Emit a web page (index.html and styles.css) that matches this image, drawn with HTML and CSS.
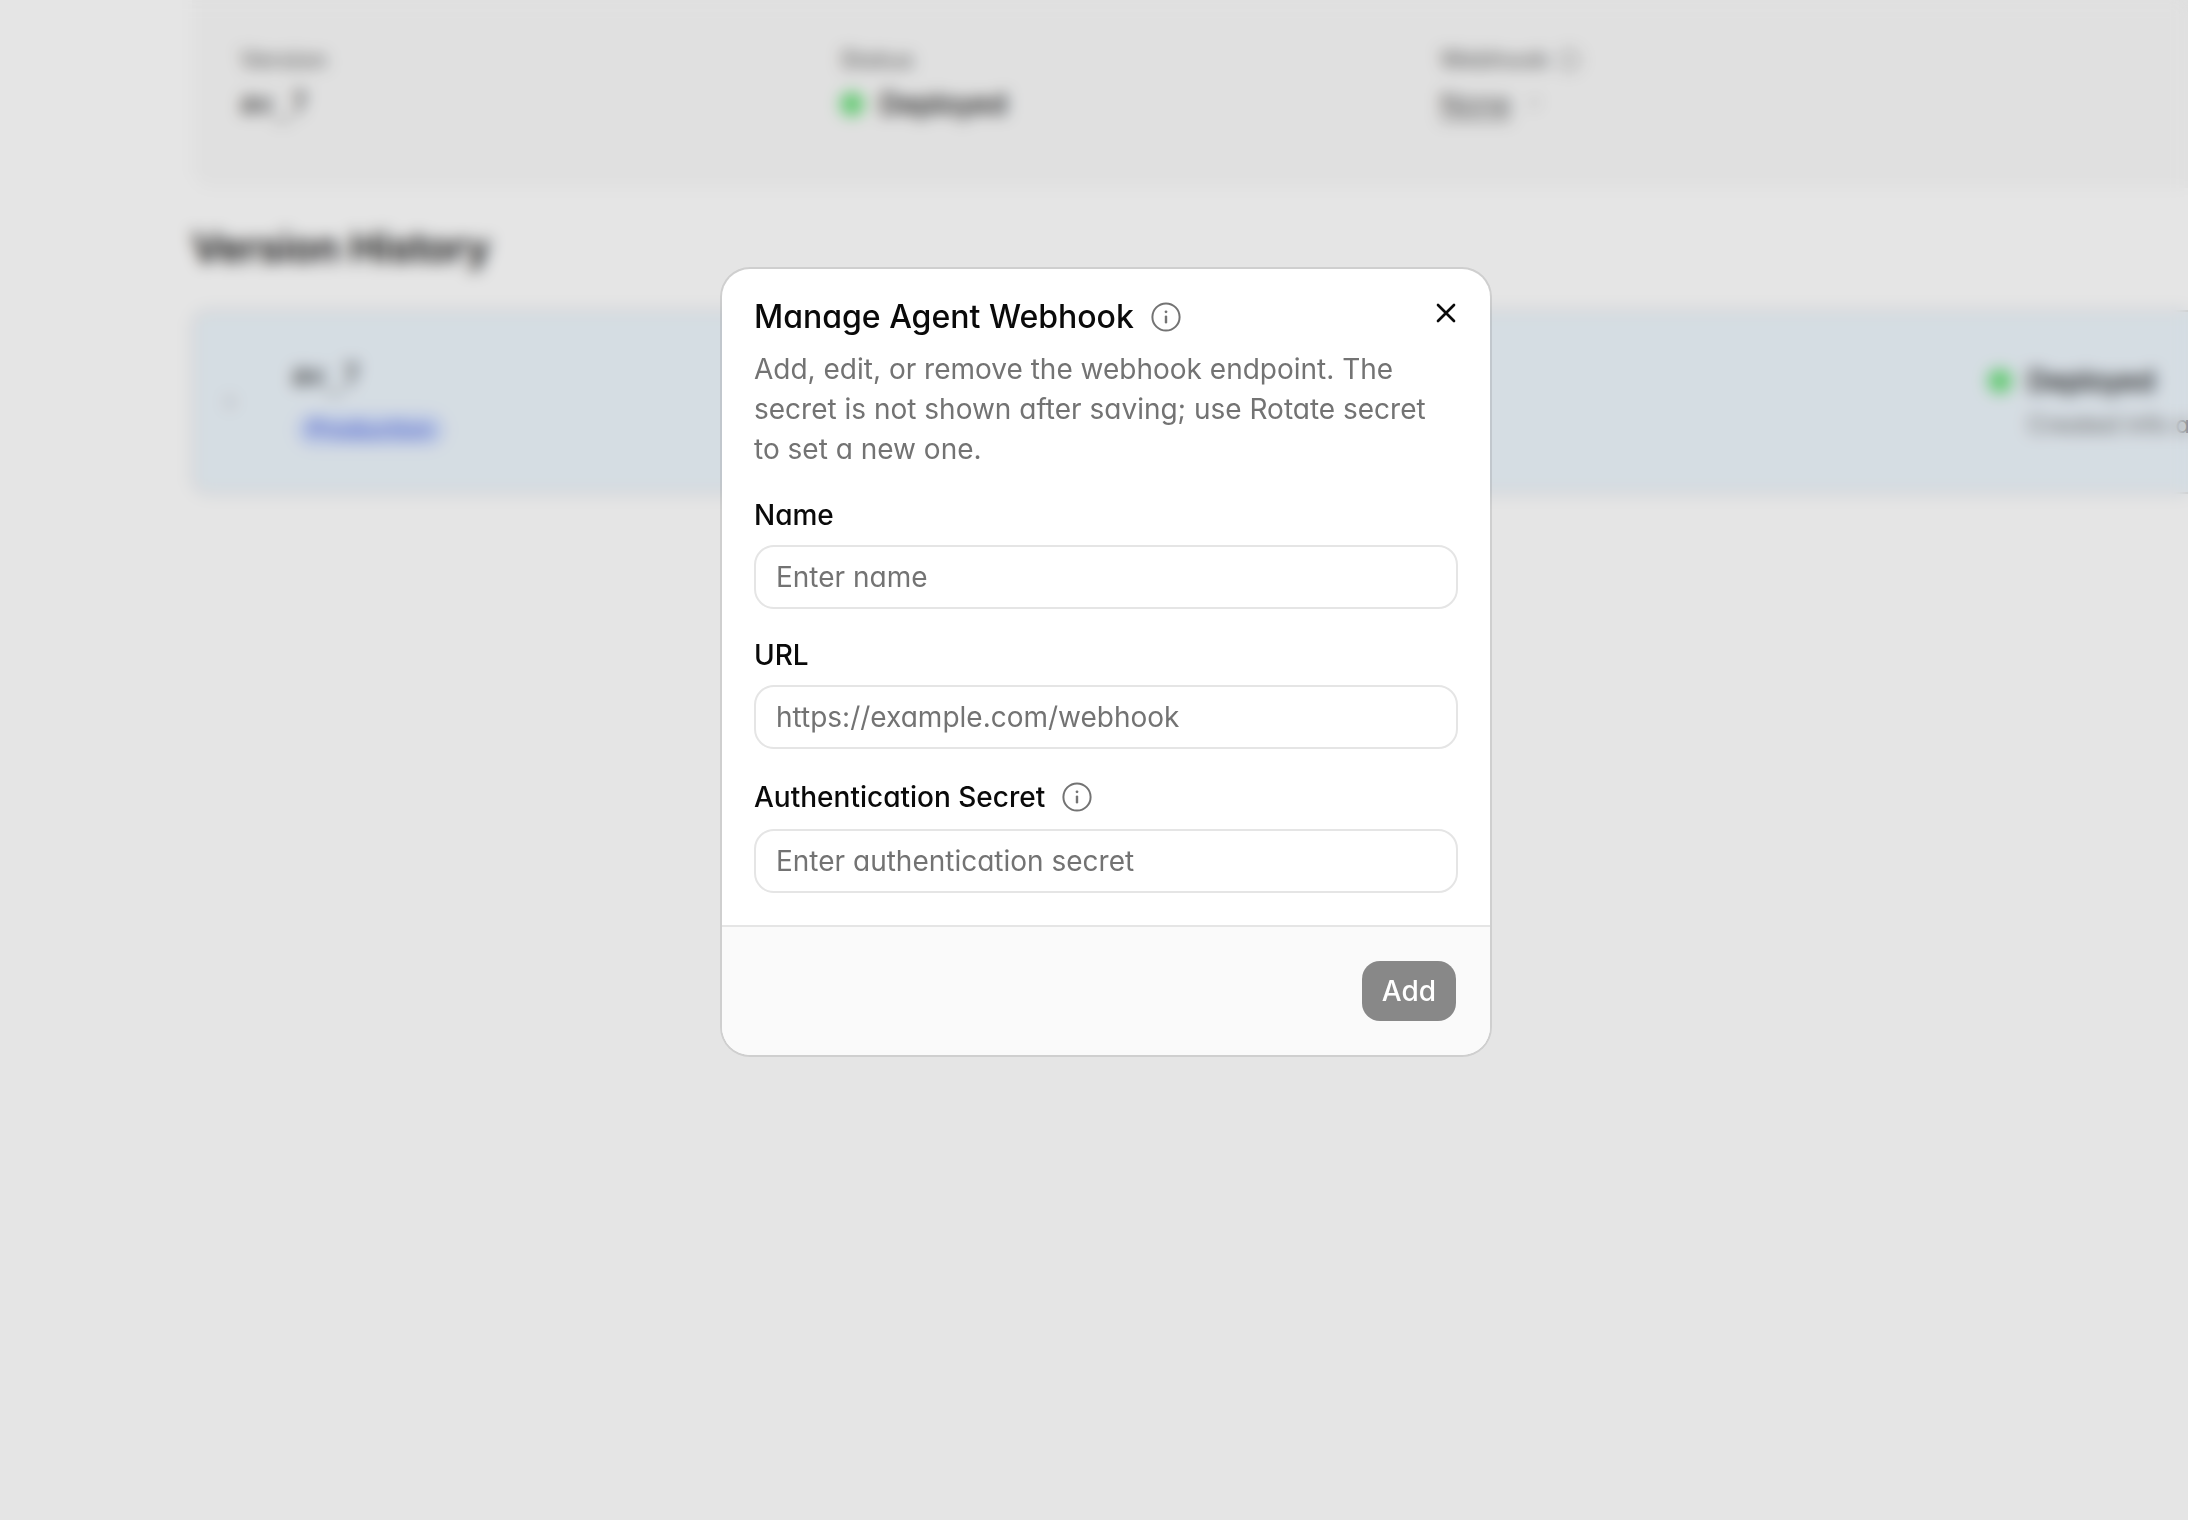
FILE: index.html
```html
<!DOCTYPE html>
<html lang="en">
<head>
  <meta charset="utf-8">
  <meta name="viewport" content="width=device-width, initial-scale=1">
  <title>Manage Agent Webhook</title>
  <link rel="stylesheet" href="styles.css">
</head>
<body>
  <main class="page" inert>
    <section class="summary">
      <div class="fact">
        <span class="fact-label">Version</span>
        <span class="fact-value mono">av_7</span>
      </div>
      <div class="fact">
        <span class="fact-label">Status</span>
        <span class="fact-value status"><span class="dot"></span>Deployed</span>
      </div>
      <div class="fact">
        <span class="fact-label">Webhook
          <svg class="icon-small" viewBox="0 0 24 24" fill="none" stroke="currentColor" stroke-width="1.5" aria-hidden="true"><circle cx="12" cy="12" r="10"/><path d="M12 11v6M12 8v.01"/></svg>
        </span>
        <span class="fact-value link-value"><a class="none-link" href="#webhook">None</a>
          <svg class="icon-edit" viewBox="0 0 24 24" fill="none" stroke="currentColor" stroke-width="2" aria-hidden="true"><path d="M7 17 17 7M11 7h6v6"/></svg>
        </span>
      </div>
    </section>
    <h2 class="history-title">Version History</h2>
    <section class="version-row">
      <svg class="chevron" viewBox="0 0 24 24" fill="none" stroke="currentColor" stroke-width="2" aria-hidden="true"><path d="m9 6 6 6-6 6"/></svg>
      <div class="version-name">
        <span class="mono">av_7</span>
        <span class="badge">Production</span>
      </div>
      <div class="version-state">
        <span class="status"><span class="dot"></span>Deployed</span>
        <span class="created">Created info ago</span>
      </div>
    </section>
  </main>

  <div class="overlay">
    <form class="dialog" role="dialog" aria-modal="true" aria-labelledby="dialog-title">
      <button class="close" type="button" aria-label="Close">
        <svg class="icon" viewBox="0 0 24 24" fill="none" stroke="currentColor" stroke-width="2" stroke-linecap="round" aria-hidden="true"><path d="M18 6 6 18M6 6l12 12"/></svg>
      </button>
      <div class="content">
        <header class="header">
          <div class="title-row">
            <h1 class="title" id="dialog-title">Manage Agent Webhook</h1>
            <svg class="icon info" viewBox="0 0 32 32" fill="none" stroke="currentColor" stroke-width="2" stroke-linecap="round" aria-hidden="true"><circle cx="16" cy="16" r="13.6"/><path stroke-width="2.4" d="M16 15.6v5.6"/><circle cx="16" cy="10.8" r="1.4" fill="currentColor" stroke="none"/></svg>
          </div>
          <p class="description">Add, edit, or remove the webhook endpoint. The secret is not shown after saving; use Rotate secret to set a new one.</p>
        </header>
        <div class="field">
          <label class="label" for="name">Name</label>
          <input class="input" id="name" type="text" placeholder="Enter name">
        </div>
        <div class="field">
          <label class="label" for="url">URL</label>
          <input class="input" id="url" type="url" placeholder="https://example.com/webhook">
        </div>
        <div class="field">
          <div class="label-row">
            <label class="label" for="secret">Authentication Secret</label>
            <svg class="icon info" viewBox="0 0 32 32" fill="none" stroke="currentColor" stroke-width="2" stroke-linecap="round" aria-hidden="true"><circle cx="16" cy="16" r="13.6"/><path stroke-width="2.4" d="M16 15.6v5.6"/><circle cx="16" cy="10.8" r="1.4" fill="currentColor" stroke="none"/></svg>
          </div>
          <input class="input" id="secret" type="password" placeholder="Enter authentication secret">
        </div>
      </div>
      <footer class="footer">
        <button class="add" type="submit" disabled>Add</button>
      </footer>
    </form>
  </div>
</body>
</html>
```
FILE: styles.css
```css
* {
  box-sizing: border-box;
}

body {
  margin: 0;
  min-height: 100vh;
  overflow: hidden;
  background: #fff;
  color: #0a0a0a;
  font-family: Inter, "Liberation Sans", sans-serif;
  font-feature-settings: "cv11";
  font-size: 28px;
  line-height: 40px;
}

h1,
h2,
p {
  margin: 0;
}

/* Page behind the dialog */
.page {
  padding-left: 192px;
}

.summary {
  display: grid;
  grid-template-columns: 600px 600px 1fr;
  padding: 40px 48px 64px;
  border-radius: 0 0 0 20px;
  background: #fafafa;
}

.fact {
  display: flex;
  flex-direction: column;
  gap: 4px;
}

.fact-label {
  display: flex;
  align-items: center;
  gap: 8px;
  color: #737373;
  font-size: 24px;
  font-weight: 500;
}

.fact-value {
  display: flex;
  align-items: center;
}

.link-value {
  gap: 12px;
}

.mono {
  font-family: "DejaVu Sans Mono", monospace;
}

.icon-small {
  width: 24px;
  height: 24px;
}

.icon-edit {
  width: 20px;
  height: 20px;
  color: #a3a3a3;
}

.none-link {
  color: #525252;
  text-underline-offset: 4px;
}

.status {
  display: flex;
  align-items: center;
  gap: 16px;
  font-weight: 500;
}

.dot {
  width: 24px;
  height: 24px;
  border-radius: 50%;
  background: #6be07c;
}

.history-title {
  padding: 38px 0 40px;
  font-size: 40px;
  font-weight: 600;
  line-height: 44px;
}

.version-row {
  display: flex;
  align-items: center;
  height: 184px;
  padding: 0 0 0 24px;
  border: 2px solid #dcdcdc;
  border-right: 0;
  border-radius: 16px 0 0 16px;
  background: #eef6fd;
}

.chevron {
  width: 24px;
  height: 24px;
  color: #a3a3a3;
}

.version-name {
  display: flex;
  flex: 1;
  flex-direction: column;
  align-items: flex-start;
  gap: 18px;
  padding: 0 0 2px 50px;
}

.badge {
  margin-left: 4px;
  padding: 0 12px;
  border-radius: 16px;
  background: #d3e1ff;
  color: #5a70e0;
  font-size: 24px;
  font-weight: 500;
  line-height: 32px;
}

.version-state {
  display: flex;
  flex: 0 0 200px;
  flex-direction: column;
  gap: 4px;
  min-width: 0;
  padding-top: 2px;
  white-space: nowrap;
}

.created {
  padding-left: 40px;
  color: #737373;
  font-size: 24px;
}

/* Dialog */
.overlay {
  position: fixed;
  inset: 0;
  display: flex;
  align-items: flex-start;
  justify-content: center;
  padding: 269px 0 0 24px;
  background: rgba(0, 0, 0, 0.1);
  backdrop-filter: blur(8px);
}

.dialog {
  position: relative;
  width: 100%;
  max-width: 768px;
  border-radius: 28px;
  background: #fff;
  box-shadow: 0 0 0 2px rgba(10, 10, 10, 0.1);
}

.content {
  display: flex;
  flex-direction: column;
  gap: 32px;
  padding: 32px;
}

.header,
.field {
  display: flex;
  flex-direction: column;
  gap: 16px;
}

.title-row,
.label-row {
  display: flex;
  align-items: center;
  gap: 16px;
}

.title {
  font-size: 32px;
  font-weight: 500;
  line-height: 32px;
}

.icon {
  display: block;
  flex: none;
  width: 32px;
  height: 32px;
}

.info {
  color: #737373;
}

.description {
  color: #737373;
}

.label {
  font-weight: 500;
  line-height: 28px;
}

.input {
  width: 100%;
  height: 64px;
  padding: 0 20px;
  border: 2px solid #e5e5e5;
  border-radius: 20px;
  outline: 0;
  background: transparent;
  color: inherit;
  font: inherit;
  font-feature-settings: inherit;
}

.input::placeholder {
  color: #737373;
  opacity: 1;
}

.close {
  position: absolute;
  top: 16px;
  right: 16px;
  display: grid;
  place-items: center;
  width: 56px;
  height: 56px;
  padding: 0;
  border: 0;
  background: none;
  color: #0a0a0a;
}

.footer {
  display: flex;
  justify-content: flex-end;
  padding: 32px;
  border-top: 2px solid #e5e5e5;
  border-radius: 0 0 28px 28px;
  background: #fafafa;
}

.add {
  height: 64px;
  padding: 0 20px;
  border: 2px solid transparent;
  border-radius: 20px;
  background: #888 padding-box;
  color: #fff;
  font: inherit;
  font-feature-settings: inherit;
  font-weight: 500;
}
```
